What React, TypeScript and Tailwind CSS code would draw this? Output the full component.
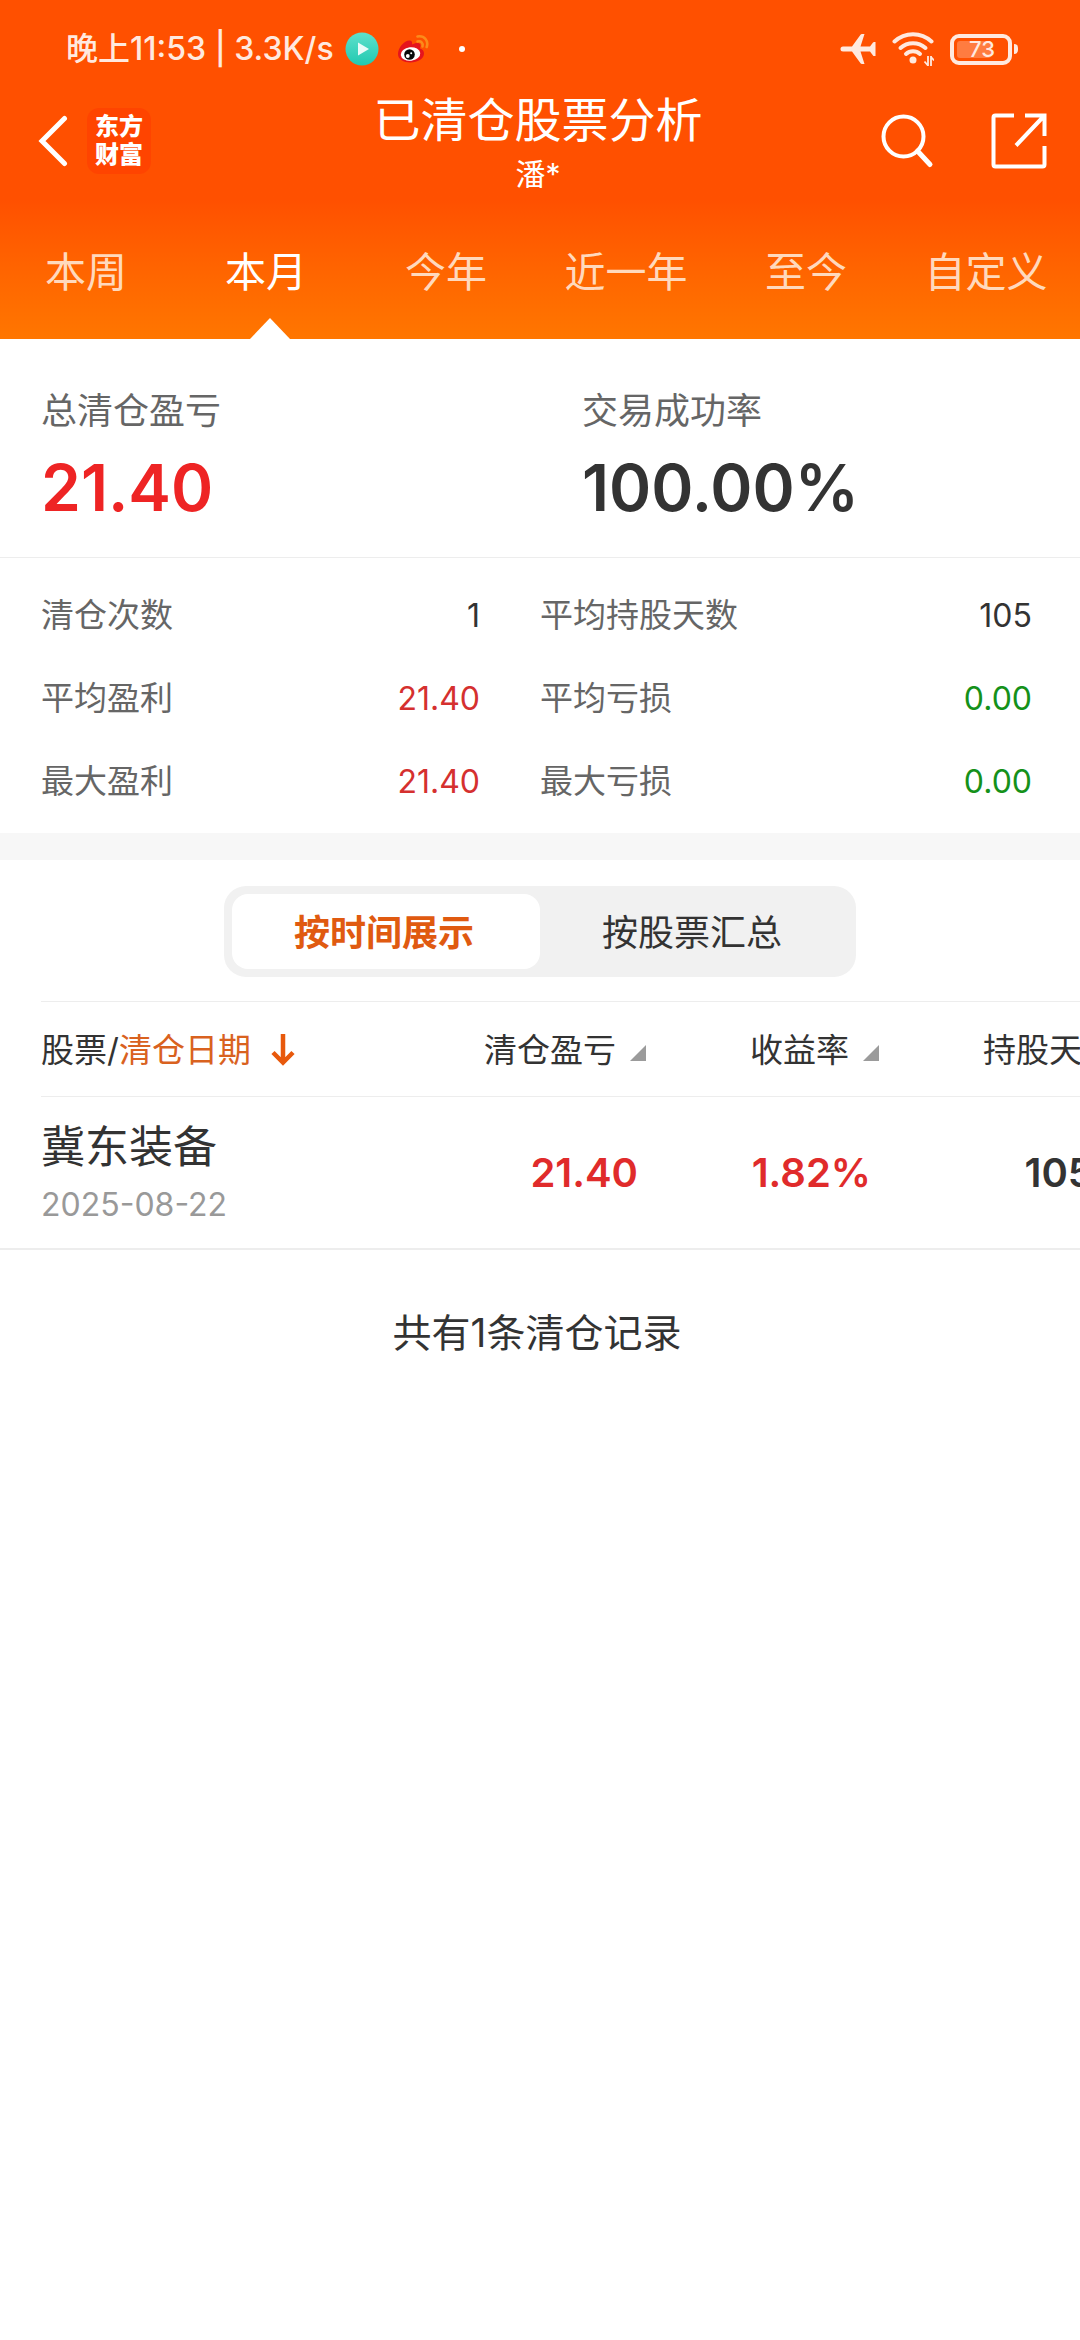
import React, { useState } from 'react';

const periods = ['本周', '本月', '今年', '近一年', '至今', '自定义'];

const stats = [
  { label: '清仓次数', value: '1', color: 'text-[#333333]' },
  { label: '平均持股天数', value: '105', color: 'text-[#333333]' },
  { label: '平均盈利', value: '21.40', color: 'text-[#d5302f]' },
  { label: '平均亏损', value: '0.00', color: 'text-[#15911a]' },
  { label: '最大盈利', value: '21.40', color: 'text-[#d5302f]' },
  { label: '最大亏损', value: '0.00', color: 'text-[#15911a]' },
];

const records = [
  { name: '冀东装备', date: '2025-08-22', profit: '21.40', rate: '1.82%', days: '105' },
];

const PlayIcon: React.FC = () => (
  <svg className="w-[34px] h-[34px]" viewBox="0 0 34 34" aria-hidden="true">
    <defs>
      <linearGradient id="play-bg" x1="0" y1="0" x2="0" y2="1">
        <stop offset="0" stopColor="#5fe0cc" />
        <stop offset="1" stopColor="#20c9b0" />
      </linearGradient>
    </defs>
    <circle cx="17" cy="17" r="16.5" fill="url(#play-bg)" />
    <path d="M13 10.5 24 17 13 23.5Z" fill="#e9fbf8" />
  </svg>
);

const WeiboIcon: React.FC = () => (
  <svg className="w-8 h-[30px]" viewBox="0 0 32 30" fill="none" aria-hidden="true">
    <path
      d="M1 20C1 14 7 6.500 12.500 6.500C15 6.500 15.500 8.500 15 10.500C18 8.500 23 8 23.500 11C23.700 12.500 23 13.500 23 14.500C25.500 15.200 27 17 27 19.500C27 25 20.500 28.500 13.500 28.500C6.500 28.500 1 25.500 1 20Z"
      fill="#e5141d"
    />
    <ellipse cx="13.500" cy="20" rx="9.800" ry="6.800" transform="rotate(-6 13.500 20)" fill="#fff" />
    <circle cx="12.500" cy="20.500" r="5.300" fill="#0a0a0a" />
    <circle cx="10.800" cy="22" r="1.900" fill="#fff" />
    <circle cx="14.200" cy="19.300" r="1" fill="#fff" />
    <path d="M20.500 7.500C24 6.500 26.500 9 25.500 12.500" stroke="#fb8b1a" strokeWidth="2.600" strokeLinecap="round" />
    <path d="M20.500 2.500C27.500 1.200 31.800 7 29.700 13" stroke="#fb8b1a" strokeWidth="2.600" strokeLinecap="round" />
  </svg>
);

const AirplaneIcon: React.FC = () => (
  <svg className="w-9 h-8" viewBox="0 0 36 32" fill="#ffe9df" aria-hidden="true">
    <path d="M3 13.500H12L20.500 1.800Q21 1 22 1H24.500L20.500 13.500H30L33 9.500Q33.400 9 34 9H35.500V23H34Q33.400 23 33 22.500L30 18.500H20.500L24.500 31H22Q21 31 20.500 30.200L12 18.500H3A2.500 2.500 0 0 1 3 13.500Z" />
  </svg>
);

const WifiIcon: React.FC = () => (
  <svg className="w-[42px] h-[34px]" viewBox="0 0 42 34" fill="none" aria-hidden="true">
    <g stroke="#ffe9df" strokeWidth="4" strokeLinecap="round">
      <path d="M2.500 9.500A27 27 0 0 1 39.500 9.500" />
      <path d="M8.500 16A18.500 18.500 0 0 1 33.500 16" />
      <path d="M14 22A10.500 10.500 0 0 1 28 22" />
    </g>
    <circle cx="21" cy="28" r="3.500" fill="#ffe9df" />
    <path d="M36 24V34M32.500 29.500 36 33.500M39 34V24M42 28.500 39 25" stroke="#ffe9df" strokeWidth="1.800" />
  </svg>
);

const Battery: React.FC = () => (
  <div className="flex items-center gap-0.5">
    <div className="flex h-[31px] w-[62px] items-center rounded-[9px] border-4 border-[#ffe9df] p-[3px]">
      <div className="flex h-full w-[34px] items-center rounded-[3px] bg-white/25 pl-3 text-[22px] leading-none font-medium text-[#ffe9df]">
        73
      </div>
    </div>
    <div className="h-2.5 w-1 rounded-r-sm bg-[#ffe9df]" />
  </div>
);

const StatusBar: React.FC = () => (
  <div className="flex h-[92px] items-center justify-between pt-[6px] pr-[62px] pl-[66px]">
    <div className="flex items-center">
      <span className="text-[32px] leading-9 font-medium text-[#ffe9df]">晚上11:53 | 3.3K/s</span>
      <div className="ml-[11px]">
        <PlayIcon />
      </div>
      <div className="ml-[18px]">
        <WeiboIcon />
      </div>
      <div className="ml-[30px] size-1.5 rounded-full bg-white" />
    </div>
    <div className="flex items-center gap-4">
      <AirplaneIcon />
      <WifiIcon />
      <Battery />
    </div>
  </div>
);

const NavBar: React.FC = () => (
  <div className="grid grid-cols-[1fr_auto_1fr] items-center pr-8 pl-9">
    <div className="flex items-center gap-[18px] pb-2.5">
      <button type="button" aria-label="返回">
        <svg className="w-[33px] h-[52px]" viewBox="0 0 33 52" fill="none" stroke="#fff" strokeWidth="5">
          <path d="M28.500 3.500 6 26 28.500 48.500" strokeLinecap="round" />
        </svg>
      </button>
      <div className="flex h-[66px] w-16 flex-col items-center justify-center rounded-xl bg-[#ff4400] text-[24px] leading-7 font-black text-white">
        <span>东方</span>
        <span>财富</span>
      </div>
    </div>
    <div className="pr-2 text-center text-white">
      <h1 className="text-[47px] leading-[56px]">已清仓股票分析</h1>
      <p className="text-[30px] leading-[52px]">潘*</p>
    </div>
    <div className="flex items-center justify-end gap-14 pb-2.5">
      <button type="button" aria-label="搜索">
        <svg className="w-[54px] h-[56px]" viewBox="0 0 54 56" fill="none" stroke="#fff" strokeWidth="4">
          <circle cx="23.500" cy="23.500" r="20" />
          <path d="M37.500 38 50 51.500" strokeWidth="5" strokeLinecap="round" />
        </svg>
      </button>
      <button type="button" aria-label="分享">
        <svg className="w-[58px] h-[58px]" viewBox="0 0 58 58" fill="none" stroke="#fff" strokeWidth="4">
          <path d="M24 3.500H5.500Q3.500 3.500 3.500 5.500V52.500Q3.500 54.500 5.500 54.500H52.500Q54.500 54.500 54.500 52.500V34" />
          <path d="M35 3.500H54.500V24M54 4 26 33.500" />
        </svg>
      </button>
    </div>
  </div>
);

const SortMark: React.FC = () => (
  <svg className="mt-1.5 w-4 h-4" viewBox="0 0 16 16" aria-hidden="true">
    <path d="M16 0V16H0Z" fill="#9b9b9b" />
  </svg>
);

export default function App() {
  const [period, setPeriod] = useState('本月');
  const [view, setView] = useState('time');

  return (
    <div className="min-h-screen overflow-hidden bg-white font-[Inter,'Noto_Sans_CJK_SC',sans-serif] text-[#333333]">
      <header className="bg-linear-to-b from-[#ff5000] from-59% to-[#ff7600]">
        <StatusBar />
        <NavBar />
        <nav className="grid h-[139px] grid-cols-6">
          {periods.map((p) => (
            <button
              key={p}
              type="button"
              onClick={() => setPeriod(p)}
              className={`relative pt-1.5 pr-2 text-[41px] leading-none whitespace-nowrap ${
                p === period ? 'text-white' : 'text-[#ffd9bd]'
              }`}
            >
              {p}
              {p === period && (
                <svg className="absolute bottom-0 left-1/2 -ml-5 w-10 h-[21px]" viewBox="0 0 40 21">
                  <path d="M20 0 40 21H0Z" fill="#fff" />
                </svg>
              )}
            </button>
          ))}
        </nav>
      </header>

      <section className="grid grid-cols-2 border-b border-[#ededed] pt-12 pb-6">
        <div className="pl-[41px]">
          <p className="text-[36px] leading-[48px] text-[#666666]">总清仓盈亏</p>
          <p className="pt-2 text-[64px] leading-[90px] font-semibold text-[#ee2424]">21.40</p>
        </div>
        <div className="pl-[42px]">
          <p className="text-[36px] leading-[48px] text-[#666666]">交易成功率</p>
          <p className="pt-2 text-[64px] leading-[90px] font-semibold">100.00%</p>
        </div>
      </section>

      <dl className="grid grid-cols-2 pt-4 pb-2.5 text-[33px] leading-[83px]">
        {stats.map((s) => (
          <div key={s.label} className="flex justify-between odd:pr-[60px] odd:pl-[41px] even:pr-12">
            <dt className="text-[#666666]">{s.label}</dt>
            <dd className={`text-[32px] ${s.color}`}>{s.value}</dd>
          </div>
        ))}
      </dl>

      <div className="h-[27px] bg-[#f7f7f7]" />

      <div className="mx-56 mt-[26px] mb-6 grid grid-cols-2 rounded-[22px] bg-[#f1f1f1] p-2 text-[36px] leading-[71px]">
        <button
          type="button"
          onClick={() => setView('time')}
          className={`rounded-2xl pt-1 pr-1 ${view === 'time' ? 'bg-white font-semibold text-[#e05a10]' : ''}`}
        >
          按时间展示
        </button>
        <button
          type="button"
          onClick={() => setView('stock')}
          className={`rounded-2xl pt-1 pr-1 ${view === 'stock' ? 'bg-white font-semibold text-[#e05a10]' : ''}`}
        >
          按股票汇总
        </button>
      </div>

      <div className="overflow-hidden border-b-2 border-[#ededed] pl-[41px]">
        <table className="w-[1104px] table-fixed border-t border-[#ededed]">
          <colgroup>
            <col className="w-[405px]" />
            <col className="w-[200px]" />
            <col className="w-[233px]" />
            <col className="w-[266px]" />
          </colgroup>
          <thead>
            <tr className="h-[95px] border-b border-[#ededed] text-[33px] leading-none">
              <th className="pt-0.5 text-left font-normal">
                <button type="button" className="flex items-center">
                  <span>
                    股票/<span className="text-[#d9621f]">清仓日期</span>
                  </span>
                  <svg className="ml-5 w-6 h-8" viewBox="0 0 24 32" fill="none" stroke="#e8590c" strokeWidth="4.500">
                    <path d="M12 0V28M2 18.500 12 28.500 22 18.500" />
                  </svg>
                </button>
              </th>
              {['清仓盈亏', '收益率', '持股天数'].map((h) => (
                <th key={h} className="pt-0.5 font-normal">
                  <button type="button" className="ml-auto flex items-center gap-3.5 whitespace-nowrap">
                    {h}
                    <SortMark />
                  </button>
                </th>
              ))}
            </tr>
          </thead>
          <tbody>
            {records.map((r) => (
              <tr key={r.name} className="h-[151px] text-[40px] font-semibold">
                <td className="pt-1.5 font-normal">
                  <div className="text-[44px] leading-[60px]">{r.name}</div>
                  <div className="text-[32px] leading-[56px] text-[#999999]">{r.date}</div>
                </td>
                <td className="pt-0.5 pr-2 text-right text-[#e02b2b]">{r.profit}</td>
                <td className="pt-0.5 pr-2 text-right text-[#e02b2b]">{r.rate}</td>
                <td className="pt-0.5 pr-[52px] text-right">{r.days}</td>
              </tr>
            ))}
          </tbody>
        </table>
      </div>

      <p className="pt-[54px] pr-1.5 text-center text-[39px] leading-[58px]">共有1条清仓记录</p>
    </div>
  );
}
